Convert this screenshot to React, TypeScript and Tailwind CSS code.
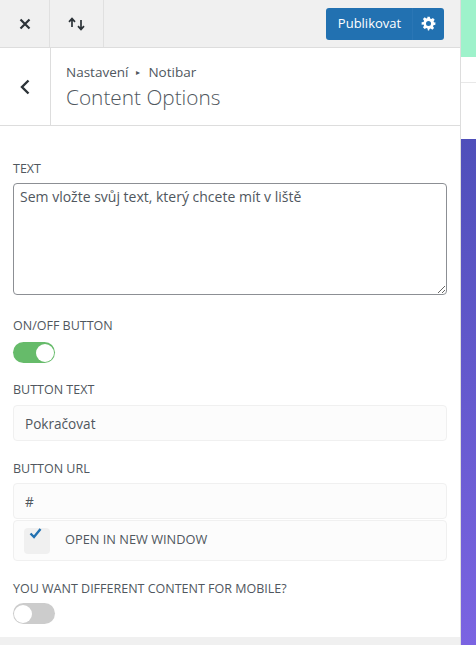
import React from "react";

function Toggle({ on }: { on: boolean }) {
  return (
    <div className={on ? "w-[42px] h-[21px] rounded-full bg-[#66bb6a] flex items-center justify-end pr-[1px]" : "w-[42px] h-[21px] rounded-full bg-[#cccccc] flex items-center justify-start pl-[1px]"}>
      <div className="w-[18px] h-[18px] rounded-full bg-white" />
    </div>
  );
}

function Label({ children }: { children: React.ReactNode }) {
  return <div className="text-[12.5px] leading-[16px] font-medium text-[#50575e] uppercase">{children}</div>;
}

function Field({ value }: { value: string }) {
  return (
    <input
      readOnly
      value={value}
      className="block w-[434px] h-[36px] px-[11px] rounded-[4px] border border-[#f0f0f0] bg-[#fcfcfc] text-[13.6px] text-[#50575e] outline-none"
    />
  );
}

export default function App() {
  return (
    <div className="w-[476px] h-[645px] overflow-hidden flex bg-white font-['Open_Sans',sans-serif]">
      <div className="w-[461px] h-full shrink-0 flex flex-col border-r border-[#dddddd]">
        <div className="h-[48px] shrink-0 flex items-center bg-[#f0f0f0] border-b border-[#dddddd]">
          <div className="w-[50px] h-full flex items-center justify-center border-r border-[#e0e0e0]">
            <svg width="12" height="12" viewBox="0 0 12 12" fill="none" stroke="#2c3338" strokeWidth="2.2">
              <path d="M1.5 1.5L10.5 10.5M10.5 1.5L1.5 10.5" />
            </svg>
          </div>
          <div className="w-[54px] h-full flex items-center justify-center border-r border-[#e0e0e0]">
            <svg width="20" height="14" viewBox="0 0 20 14" fill="none" stroke="#2c3338" strokeWidth="1.7">
              <path d="M5 10V2M2 4.8L5 1.6L8 4.8" />
              <path d="M14 3V12M11 9.2L14 12.4L17 9.2" />
            </svg>
          </div>
          <div className="ml-auto mr-[16px] h-[32px] w-[118px] flex rounded-[3px] bg-[#2271b1] text-white">
            <div className="w-[87px] pl-[1px] flex items-center justify-center text-[13px] font-medium border-r border-[#2a76b5]">Publikovat</div>
            <div className="flex-1 flex items-center justify-center">
              <svg width="15" height="15" viewBox="0 0 24 24" fill="white">
                <path fillRule="evenodd" d="M10 1h4l.6 3.1 1.9.8 2.6-1.8 2.8 2.8-1.8 2.6.8 1.9L23 10v4l-3.1.6-.8 1.9 1.8 2.6-2.8 2.8-2.6-1.8-1.9.8L13 23h-2l-.6-3.1-1.9-.8-2.6 1.8-2.8-2.8 1.8-2.6-.8-1.9L1 14v-4l3.1-.6.8-1.9L3.1 4.9l2.8-2.8 2.6 1.8 1.9-.8L10 1zM12 8a4 4 0 100 8 4 4 0 000-8z" />
              </svg>
            </div>
          </div>
        </div>
        <div className="h-[78px] shrink-0 flex border-b border-[#dddddd]">
          <div className="w-[51px] flex items-center justify-center border-r border-[#dddddd]">
            <svg width="10" height="16" viewBox="0 0 10 16" fill="none" stroke="#2c3338" strokeWidth="2.4">
              <path d="M8.5 1.5L2 8L8.5 14.5" />
            </svg>
          </div>
          <div className="pl-[15px] pt-[15px]">
            <div className="text-[13.5px] leading-[18px] text-[#50575e] flex items-center">
              Nastavení
              <span className="mx-[8px] text-[8px] text-[#50575e]">▸</span>
              Notibar
            </div>
            <div className="text-[20.8px] leading-[28px] font-light text-[#50575e] mt-[2px]">Content Options</div>
          </div>
        </div>
        <div className="flex-1 pl-[13px] pt-[35px] flex flex-col">
          <Label>Text</Label>
          <textarea
            readOnly
            defaultValue="Sem vložte svůj text, který chcete mít v liště"
            className="mt-[6px] block w-[434px] h-[112px] shrink-0 px-[6px] py-[2px] rounded-[4px] border border-[#8c8f94] bg-white text-[14px] leading-[22px] text-[#50575e] outline-none"
          />
          <div className="mt-[23px]"><Label>On/Off Button</Label></div>
          <div className="mt-[8px]"><Toggle on /></div>
          <div className="mt-[19px]"><Label>Button Text</Label></div>
          <div className="mt-[7px]"><Field value="Pokračovat" /></div>
          <div className="mt-[20px]"><Label>Button URL</Label></div>
          <div className="mt-[6px]"><Field value="#" /></div>
          <div className="w-[434px] h-[41px] mt-[1px] shrink-0 flex items-center pl-[10px] rounded-[4px] border border-[#f0f0f0] bg-[#fcfcfc]">
            <div className="relative w-[26px] h-[26px] rounded-[4px] bg-[#f0f0f0]">
              <svg className="absolute left-[5px] top-[-1px]" width="13" height="13" viewBox="0 0 13 13" fill="none" stroke="#2271b1" strokeWidth="2.4">
                <path d="M1.5 6.5L5 10L11.5 2" />
              </svg>
            </div>
            <span className="ml-[15px] text-[12.8px] font-medium text-[#50575e] -mt-[1px]">OPEN IN NEW WINDOW</span>
          </div>
          <div className="mt-[20px]"><Label>You want different content for mobile?</Label></div>
          <div className="mt-[6px]"><Toggle on={false} /></div>
          <div className="mt-auto -ml-[13px] h-[8px] bg-[#f0f0f0]" />
        </div>
      </div>
      <div className="flex-1 flex flex-col">
        <div className="h-[57px] bg-[#9ef2cb]" />
        <div className="h-[26px] bg-white border-b border-[#e8e8e8]" />
        <div className="h-[56px] bg-white" />
        <div className="flex-1 bg-gradient-to-b from-[#4f4fba] to-[#7b64e2]" />
      </div>
    </div>
  );
}
